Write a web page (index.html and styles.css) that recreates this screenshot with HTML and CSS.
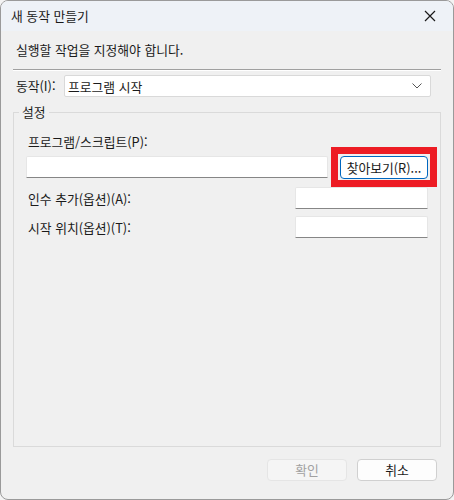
FILE: index.html
```html
<!DOCTYPE html>
<html lang="ko">
<head>
<meta charset="utf-8">
<link rel="stylesheet" href="styles.css">
</head>
<body>
<div class="window">
  <div class="titlebar">
    <span class="title">새 동작 만들기</span>
    <span class="close">
      <svg width="12" height="12" viewBox="0 0 12 12"><path d="M1 1 L11 11 M11 1 L1 11" stroke="#1a1a1a" stroke-width="1.2" fill="none"/></svg>
    </span>
  </div>
  <div class="content">
    <div class="instruction">실행할 작업을 지정해야 합니다.</div>
    <div class="separator"></div>
    <div class="action-row">
      <span class="label">동작(I):</span>
      <div class="combo">
        <span>프로그램 시작</span>
        <svg width="10" height="6" viewBox="0 0 10 6"><path d="M0.5 0.5 L5 5 L9.5 0.5" stroke="#555" stroke-width="1" fill="none"/></svg>
      </div>
    </div>
    <fieldset class="group">
      <legend>설정</legend>
      <div class="field-label">프로그램/스크립트(P):</div>
      <div class="program-row">
        <div class="input"></div>
        <button class="btn browse">찾아보기(R)...</button>
      </div>
      <div class="opt-row">
        <span class="label">인수 추가(옵션)(A):</span>
        <div class="input small"></div>
      </div>
      <div class="opt-row">
        <span class="label">시작 위치(옵션)(T):</span>
        <div class="input small"></div>
      </div>
    </fieldset>
    <div class="buttons">
      <button class="btn disabled">확인</button>
      <button class="btn">취소</button>
    </div>
  </div>
</div>
</body>
</html>
```
FILE: styles.css
```css
html, body {
  margin: 0;
  padding: 0;
  background: #f3f3f3;
}
body {
  font-family: "Noto Sans CJK KR", "Noto Sans", sans-serif;
  font-size: 12.8px;
  color: #1a1a1a;
}
.window {
  width: 454px;
  height: 500px;
  box-sizing: border-box;
  border: 1px solid #9a9a9a;
  border-radius: 8px;
  background: #f0f0f0;
  overflow: hidden;
  display: flex;
  flex-direction: column;
}
.titlebar {
  height: 30px;
  background: #eef2f7;
  display: flex;
  align-items: center;
  justify-content: space-between;
  padding-left: 10px;
  flex: none;
}
.title {
  line-height: 16px;
  color: #1a1a1a;
}
.close {
  width: 46px;
  height: 30px;
  display: flex;
  align-items: center;
  justify-content: center;
}
.content {
  padding: 0 12px;
  display: flex;
  flex-direction: column;
  flex: 1;
}
.instruction {
  margin-top: 11px;
  padding-left: 3px;
  line-height: 16px;
}
.separator {
  margin-top: 11px;
  height: 0;
  border-top: 1px solid #a0a0a0;
  border-bottom: 1px solid #ffffff;
}
.action-row {
  margin-top: 4px;
  display: flex;
  align-items: center;
  padding-left: 3px;
}
.action-row .label {
  width: 48px;
  line-height: 16px;
}
.combo {
  flex: none;
  width: 367px;
  height: 22px;
  box-sizing: border-box;
  background: #fff;
  border: 1px solid #d9d9d9;
  border-radius: 2px;
  display: flex;
  align-items: center;
  justify-content: space-between;
  padding: 0 8px 0 3px;
}
.group {
  margin: 7px 0 0 0;
  padding: 0 12px;
  border: 1px solid #dadada;
  height: 343px;
  box-sizing: border-box;
  min-width: 0;
}
.group legend {
  padding: 0 3px;
  margin-left: -7px;
  line-height: 16px;
}
.field-label {
  margin-top: 14px;
  padding-left: 2px;
  line-height: 16px;
}
.program-row {
  margin-top: 6px;
  display: flex;
  align-items: flex-start;
}
.input {
  height: 22px;
  box-sizing: border-box;
  background: #fff;
  border: 1px solid #e6e6e6;
  border-bottom-color: #868686;
  border-radius: 2px 2px 0 0;
}
.program-row .input {
  flex: 1;
}
.btn {
  font-family: inherit;
  font-size: 12.8px;
  color: #1a1a1a;
  background: #fdfdfd;
  border: 1px solid #d0d0d0;
  border-radius: 4px;
  height: 23px;
  padding: 0;
  box-sizing: border-box;
  line-height: 16px;
  position: relative;
}
.browse {
  width: 88px;
  margin-left: 12px;
  border: 1px solid #0067c0;
  background: #fff;
}
.browse::after {
  content: "";
  position: absolute;
  left: -10px;
  top: -10px;
  right: -10px;
  bottom: -9px;
  border: 7px solid #ed1c24;
}
.opt-row {
  margin-top: 8px;
  display: flex;
  align-items: center;
  justify-content: space-between;
  padding-left: 2px;
}
.opt-row + .opt-row {
  margin-top: 7px;
}
.input.small {
  width: 133px;
}
.buttons {
  margin-top: 12px;
  display: flex;
  justify-content: flex-end;
  gap: 10px;
  padding-right: 4px;
}
.buttons .btn {
  width: 80px;
  height: 22px;
}
.btn.disabled {
  color: #a0a0a0;
  background: #f5f5f5;
  border-color: #e5e5e5;
}
```
